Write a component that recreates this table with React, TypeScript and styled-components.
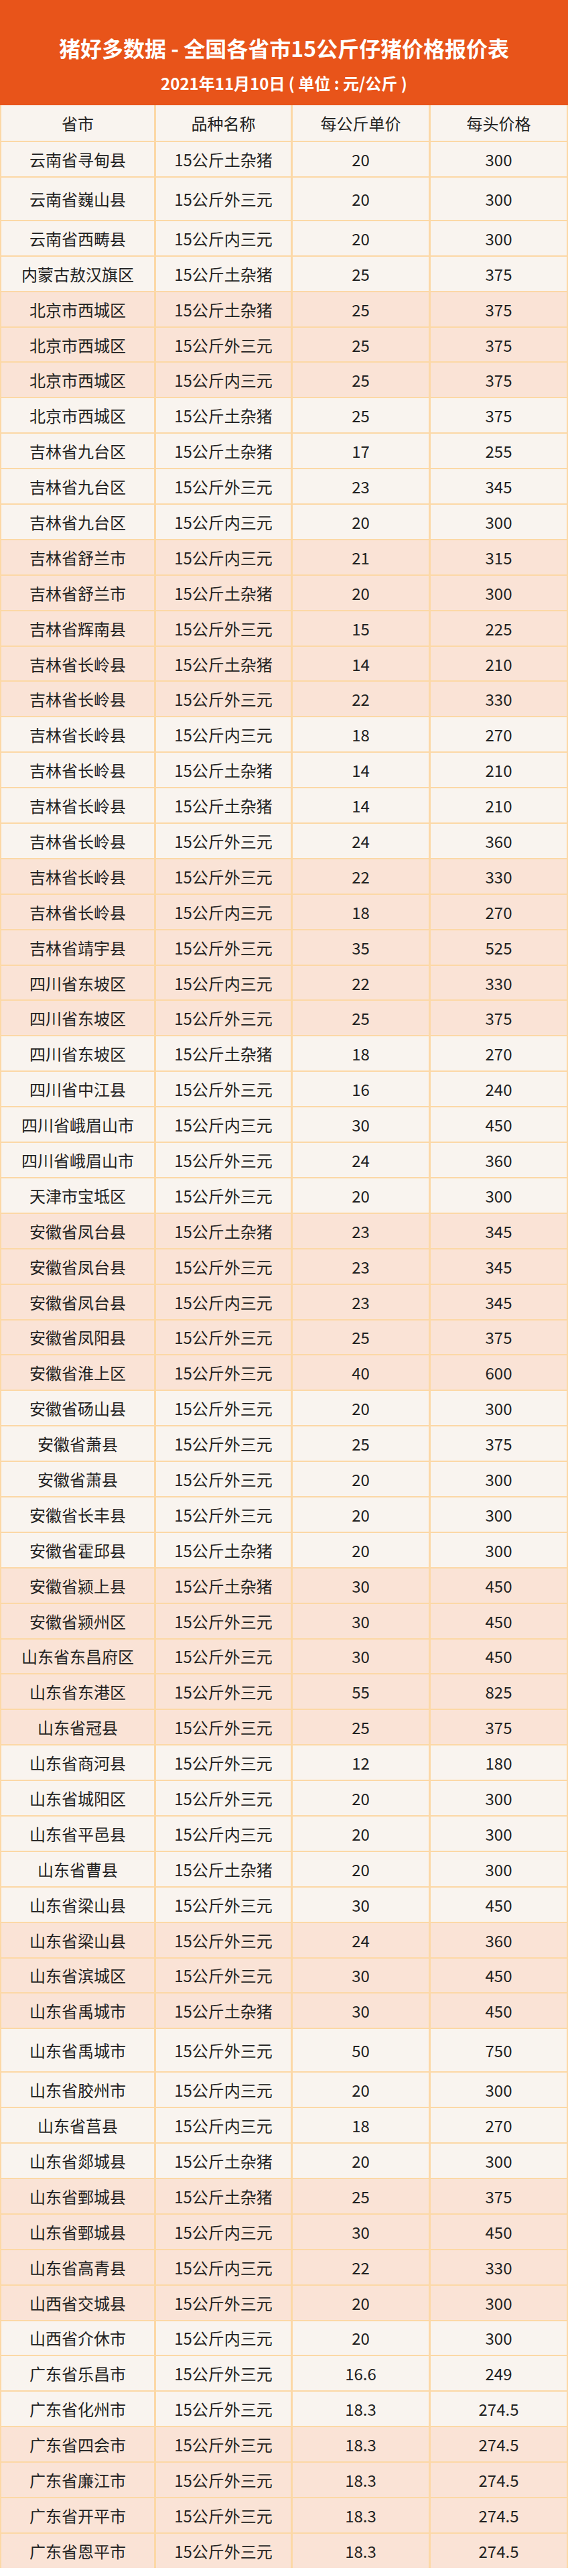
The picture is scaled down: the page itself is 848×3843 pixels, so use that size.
import React from "react";
import styled, { createGlobalStyle } from "styled-components";

type Tone = "light" | "pink";

interface IRow {
  area: string;
  breed: string;
  unit: string;
  head: string;
  tone: Tone;
  tall?: boolean;
}

const T = "15公斤土杂猪";
const W = "15公斤外三元";
const N = "15公斤内三元";

// [省市, 品种, 单价, 每头, 色带(l/p), 高行]
const raw: [string, string, string, string, string, boolean?][] = [
  ["云南省寻甸县", T, "20", "300", "l"],
  ["云南省巍山县", W, "20", "300", "l", true],
  ["云南省西畴县", N, "20", "300", "l"],
  ["内蒙古敖汉旗区", T, "25", "375", "l"],
  ["北京市西城区", T, "25", "375", "p"],
  ["北京市西城区", W, "25", "375", "p"],
  ["北京市西城区", N, "25", "375", "p"],
  ["北京市西城区", T, "25", "375", "l"],
  ["吉林省九台区", T, "17", "255", "l"],
  ["吉林省九台区", W, "23", "345", "l"],
  ["吉林省九台区", N, "20", "300", "l"],
  ["吉林省舒兰市", N, "21", "315", "p"],
  ["吉林省舒兰市", T, "20", "300", "p"],
  ["吉林省辉南县", W, "15", "225", "p"],
  ["吉林省长岭县", T, "14", "210", "p"],
  ["吉林省长岭县", W, "22", "330", "p"],
  ["吉林省长岭县", N, "18", "270", "l"],
  ["吉林省长岭县", T, "14", "210", "l"],
  ["吉林省长岭县", T, "14", "210", "l"],
  ["吉林省长岭县", W, "24", "360", "l"],
  ["吉林省长岭县", W, "22", "330", "p"],
  ["吉林省长岭县", N, "18", "270", "p"],
  ["吉林省靖宇县", W, "35", "525", "p"],
  ["四川省东坡区", N, "22", "330", "p"],
  ["四川省东坡区", W, "25", "375", "p"],
  ["四川省东坡区", T, "18", "270", "l"],
  ["四川省中江县", W, "16", "240", "l"],
  ["四川省峨眉山市", N, "30", "450", "l"],
  ["四川省峨眉山市", W, "24", "360", "l"],
  ["天津市宝坻区", W, "20", "300", "l"],
  ["安徽省凤台县", T, "23", "345", "p"],
  ["安徽省凤台县", W, "23", "345", "p"],
  ["安徽省凤台县", N, "23", "345", "p"],
  ["安徽省凤阳县", W, "25", "375", "p"],
  ["安徽省淮上区", W, "40", "600", "p"],
  ["安徽省砀山县", W, "20", "300", "l"],
  ["安徽省萧县", W, "25", "375", "l"],
  ["安徽省萧县", W, "20", "300", "l"],
  ["安徽省长丰县", W, "20", "300", "l"],
  ["安徽省霍邱县", T, "20", "300", "l"],
  ["安徽省颍上县", T, "30", "450", "p"],
  ["安徽省颍州区", W, "30", "450", "p"],
  ["山东省东昌府区", W, "30", "450", "p"],
  ["山东省东港区", W, "55", "825", "p"],
  ["山东省冠县", W, "25", "375", "p"],
  ["山东省商河县", W, "12", "180", "l"],
  ["山东省城阳区", W, "20", "300", "l"],
  ["山东省平邑县", N, "20", "300", "l"],
  ["山东省曹县", T, "20", "300", "l"],
  ["山东省梁山县", W, "30", "450", "l"],
  ["山东省梁山县", W, "24", "360", "p"],
  ["山东省滨城区", W, "30", "450", "p"],
  ["山东省禹城市", T, "30", "450", "p"],
  ["山东省禹城市", W, "50", "750", "l", true],
  ["山东省胶州市", N, "20", "300", "l"],
  ["山东省莒县", N, "18", "270", "l"],
  ["山东省郯城县", T, "20", "300", "l"],
  ["山东省鄄城县", T, "25", "375", "p"],
  ["山东省鄄城县", N, "30", "450", "p"],
  ["山东省高青县", N, "22", "330", "p"],
  ["山西省交城县", W, "20", "300", "p"],
  ["山西省介休市", N, "20", "300", "l"],
  ["广东省乐昌市", W, "16.6", "249", "l"],
  ["广东省化州市", W, "18.3", "274.5", "l"],
  ["广东省四会市", W, "18.3", "274.5", "p"],
  ["广东省廉江市", W, "18.3", "274.5", "p"],
  ["广东省开平市", W, "18.3", "274.5", "p"],
  ["广东省恩平市", W, "18.3", "274.5", "p"],
];

const rows: IRow[] = raw.map(([area, breed, unit, head, tone, tall]) => ({
  area,
  breed,
  unit,
  head,
  tone: tone === "p" ? "pink" : "light",
  tall,
}));

const headers = ["省市", "品种名称", "每公斤单价", "每头价格"];

export default function App(): JSX.Element {
  return (
    <>
      <GlobalStyle />
      <Page>
        <Banner>
          <Title>猪好多数据 - 全国各省市15公斤仔猪价格报价表</Title>
          <SubTitle>2021年11月10日 ( 单位 : 元/公斤 )</SubTitle>
        </Banner>
        <Table>
          <HeadRow>
            {headers.map((h) => (
              <Cell key={h} $tone="light">
                {h}
              </Cell>
            ))}
          </HeadRow>
          {rows.map((r, i) => (
            <Row key={i} $tall={r.tall}>
              <Cell $tone={r.tone}>{r.area}</Cell>
              <Cell $tone={r.tone}>{r.breed}</Cell>
              <Cell $tone={r.tone}>{r.unit}</Cell>
              <Cell $tone={r.tone}>{r.head}</Cell>
            </Row>
          ))}
        </Table>
      </Page>
    </>
  );
}

const GlobalStyle = createGlobalStyle`
  html, body {
    margin: 0;
    padding: 0;
    background: #ffffff;
  }
  body {
    font-family: "Noto Sans CJK SC", "Noto Sans", sans-serif;
  }
`;

const Page = styled.div`
  width: 848px;
  padding-bottom: 8px;
`;

const Banner = styled.header`
  height: 157px;
  box-sizing: border-box;
  padding-top: 51px;
  background: #e8541a;
  color: #ffffff;
  text-align: center;
`;

const Title = styled.h1`
  margin: 0;
  font-size: 32px;
  line-height: 40px;
  font-weight: 700;
`;

const SubTitle = styled.div`
  margin-top: 17px;
  font-size: 24px;
  line-height: 32px;
  font-weight: 700;
`;

const Table = styled.div`
  display: flex;
  flex-direction: column;
  background: #fcd8a6;
  padding: 0 2px;
`;

const Row = styled.div<{ $tall?: boolean }>`
  display: grid;
  grid-template-columns: 228px 201px 203px 1fr;
  column-gap: 3px;
  height: ${(p) => (p.$tall ? "63px" : "50.9px")};
  margin-bottom: 2px;

  &:last-child {
    margin-bottom: 0;
  }
`;

const HeadRow = styled(Row)`
  height: 53px;
`;

const Cell = styled.div<{ $tone: Tone }>`
  display: flex;
  align-items: center;
  justify-content: center;
  background: ${(p) => (p.$tone === "pink" ? "#fae3d6" : "#f9f4ef")};
  color: #222222;
  font-size: 24px;
  white-space: nowrap;
`;
